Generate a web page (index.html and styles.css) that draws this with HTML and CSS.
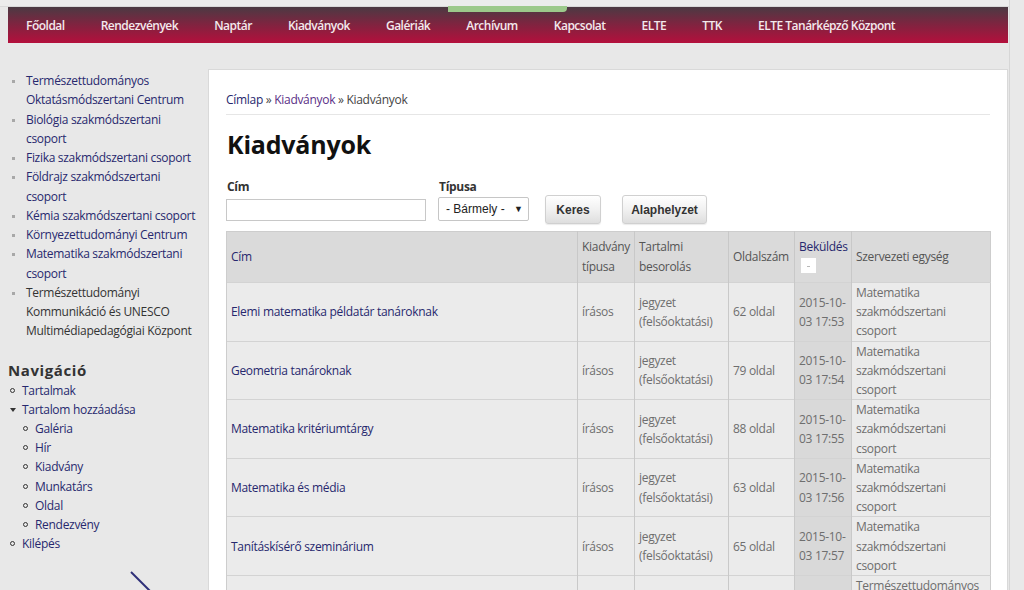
FILE: index.html
```html
<!DOCTYPE html>
<html lang="hu">
<head>
<meta charset="utf-8">
<title>Kiadványok</title>
<link rel="stylesheet" href="styles.css">
</head>
<body>
<div class="page">
  <div class="topline"></div>
  <nav class="mainnav">
    <a href="#">Főoldal</a>
    <a href="#">Rendezvények</a>
    <a href="#">Naptár</a>
    <a href="#">Kiadványok</a>
    <a href="#">Galériák</a>
    <a href="#" class="active">Archívum</a>
    <a href="#">Kapcsolat</a>
    <a href="#">ELTE</a>
    <a href="#">TTK</a>
    <a href="#">ELTE Tanárképző Központ</a>
  </nav>
  <div class="layout">
    <aside class="sidebar">
      <ul class="units">
        <li><a href="#">Természettudományos Oktatásmódszertani Centrum</a></li>
        <li><a href="#">Biológia szakmódszertani csoport</a></li>
        <li><a href="#">Fizika szakmódszertani csoport</a></li>
        <li><a href="#">Földrajz szakmódszertani csoport</a></li>
        <li><a href="#">Kémia szakmódszertani csoport</a></li>
        <li><a href="#">Környezettudományi Centrum</a></li>
        <li><a href="#">Matematika szakmódszertani csoport</a></li>
        <li class="plain">Természettudományi Kommunikáció és UNESCO Multimédiapedagógiai Központ</li>
      </ul>
      <h2 class="navtitle">Navigáció</h2>
      <ul class="navlist">
        <li><a href="#">Tartalmak</a></li>
        <li class="open"><a href="#">Tartalom hozzáadása</a>
          <ul class="sublist">
            <li><a href="#">Galéria</a></li>
            <li><a href="#">Hír</a></li>
            <li><a href="#">Kiadvány</a></li>
            <li><a href="#">Munkatárs</a></li>
            <li><a href="#">Oldal</a></li>
            <li><a href="#">Rendezvény</a></li>
          </ul>
        </li>
        <li><a href="#">Kilépés</a></li>
      </ul>
      <svg class="deco" width="40" height="24" viewBox="0 0 40 24"><line x1="2" y1="2" x2="22" y2="22" stroke="#2e2f78" stroke-width="2"/></svg>
    </aside>
    <main class="main">
      <div class="breadcrumb"><a href="#">Címlap</a> » <a href="#" class="visited">Kiadványok</a> » Kiadványok</div>
      <h1 class="title">Kiadványok</h1>
      <form class="filters">
        <div class="field">
          <label class="label">Cím</label>
          <input type="text" class="text-input">
        </div>
        <div class="field">
          <label class="label">Típusa</label>
          <div class="select"><span>- Bármely -</span><span class="arrow">▼</span></div>
        </div>
        <button type="button" class="btn btn-search">Keres</button>
        <button type="button" class="btn btn-reset">Alaphelyzet</button>
      </form>
      <table class="list">
        <colgroup>
          <col class="c1"><col class="c2"><col class="c3"><col class="c4"><col class="c5"><col class="c6">
        </colgroup>
        <thead>
          <tr>
            <th><a href="#">Cím</a></th>
            <th>Kiadvány típusa</th>
            <th>Tartalmi besorolás</th>
            <th>Oldalszám</th>
            <th class="sorted"><a href="#">Beküldés</a><br><span class="sorticon"><span></span></span></th>
            <th>Szervezeti egység</th>
          </tr>
        </thead>
        <tbody>
          <tr>
            <td><a href="#">Elemi matematika példatár tanároknak</a></td>
            <td>írásos</td>
            <td>jegyzet (felsőoktatási)</td>
            <td>62 oldal</td>
            <td class="sorted">2015-10-03 17:53</td>
            <td>Matematika szakmódszertani csoport</td>
          </tr>
          <tr>
            <td><a href="#">Geometria tanároknak</a></td>
            <td>írásos</td>
            <td>jegyzet (felsőoktatási)</td>
            <td>79 oldal</td>
            <td class="sorted">2015-10-03 17:54</td>
            <td>Matematika szakmódszertani csoport</td>
          </tr>
          <tr>
            <td><a href="#">Matematika kritériumtárgy</a></td>
            <td>írásos</td>
            <td>jegyzet (felsőoktatási)</td>
            <td>88 oldal</td>
            <td class="sorted">2015-10-03 17:55</td>
            <td>Matematika szakmódszertani csoport</td>
          </tr>
          <tr>
            <td><a href="#">Matematika és média</a></td>
            <td>írásos</td>
            <td>jegyzet (felsőoktatási)</td>
            <td>63 oldal</td>
            <td class="sorted">2015-10-03 17:56</td>
            <td>Matematika szakmódszertani csoport</td>
          </tr>
          <tr>
            <td><a href="#">Tanításkísérő szeminárium</a></td>
            <td>írásos</td>
            <td>jegyzet (felsőoktatási)</td>
            <td>65 oldal</td>
            <td class="sorted">2015-10-03 17:57</td>
            <td>Matematika szakmódszertani csoport</td>
          </tr>
          <tr>
            <td><a href="#">A természettudományos oktatás módszertani kérdései</a></td>
            <td>írásos</td>
            <td>jegyzet (felsőoktatási)</td>
            <td>120 oldal</td>
            <td class="sorted">2015-10-03 17:58</td>
            <td>Természettudományos Oktatásmódszertani Centrum</td>
          </tr>
        </tbody>
      </table>
    </main>
  </div>
</div>
</body>
</html>
```

FILE: styles.css
```css
html, body {
  margin: 0;
  padding: 0;
}
body {
  background: #e9e9e9;
  font-family: "Open Sans", "DejaVu Sans", sans-serif;
  font-size: 12px;
  letter-spacing: -0.3px;
  color: #333;
  overflow: hidden;
}
a {
  color: #27286e;
  text-decoration: none;
}
.page {
  width: 1009px;
  min-height: 590px;
  border-right: 1px solid #d6d6d6;
  background: #e8e8e8;
}
.topline {
  height: 6px;
  background: #ececec;
  border-bottom: 1px solid #d9d9d9;
}
.mainnav {
  position: relative;
  margin-left: 8px;
  width: 1000px;
  height: 36px;
  box-sizing: border-box;
  display: flex;
  align-items: center;
  background: linear-gradient(to bottom, #4b3a43 0%, #7c2540 45%, #b40f3c 100%);
}
.mainnav a {
  position: relative;
  padding: 0 18px;
  color: #f3e9ec;
  font-weight: 600;
  font-size: 12px;
  letter-spacing: -0.5px;
  line-height: 37px;
  white-space: nowrap;
}
.mainnav a.active::before {
  content: "";
  position: absolute;
  left: 0;
  top: -1px;
  width: 119px;
  height: 6px;
  background: #9cc98b;
  border-radius: 0 0 4px 0;
}
.layout {
  display: flex;
  align-items: flex-start;
  padding-top: 26px;
}
.sidebar {
  width: 200px;
  flex: none;
  position: relative;
}
.units, .navlist, .sublist {
  list-style: none;
  margin: 0;
  padding: 0;
}
.units {
  padding: 2px 0 0 26px;
  line-height: 19.25px;
}
.units li {
  position: relative;
}
.units li::before {
  content: "";
  position: absolute;
  left: -14px;
  top: 9px;
  width: 3px;
  height: 3px;
  background: #a8a8a8;
}
.units li.plain {
  color: #333;
}
.navtitle {
  margin: 19px 0 0 8px;
  font-size: 15px;
  font-weight: 700;
  letter-spacing: 0.6px;
  line-height: 20px;
  color: #333;
}
.navlist {
  padding-left: 22px;
  line-height: 19.2px;
  margin-top: 1px;
}
.navlist li {
  position: relative;
}
.navlist li::before {
  content: "";
  position: absolute;
  left: -12px;
  top: 7px;
  width: 3px;
  height: 3px;
  border: 1px solid #333;
  border-radius: 50%;
}
.navlist li.open::before {
  left: -12px;
  top: 8px;
  width: 0;
  height: 0;
  border: none;
  border-radius: 0;
  border-left: 3px solid transparent;
  border-right: 3px solid transparent;
  border-top: 4px solid #333;
}
.sublist {
  padding-left: 13px;
}
.deco {
  display: block;
  margin: 17px 0 0 129px;
}
.main {
  margin-left: 8px;
  width: 800px;
  box-sizing: border-box;
  background: #fff;
  border: 1px solid #d9d9d9;
  padding: 0 17px;
  min-height: 540px;
}
.breadcrumb {
  padding-top: 21px;
  padding-bottom: 5px;
  line-height: 18px;
  font-size: 12px;
  color: #444;
  border-bottom: 1px solid #e6e6e6;
}
.breadcrumb a.visited {
  color: #5a2f86;
}
.title {
  margin: 12px 0 0 1px;
  font-size: 25px;
  font-weight: 700;
  letter-spacing: -0.2px;
  line-height: 34px;
  color: #111;
}
.filters {
  display: flex;
  align-items: flex-start;
  margin-top: 17px;
  height: 53px;
}
.field {
  display: flex;
  flex-direction: column;
  margin-right: 12px;
}
.label {
  font-weight: 700;
  font-size: 12px;
  line-height: 17px;
  color: #333;
  padding-left: 1px;
  margin-bottom: 4px;
}
.text-input {
  width: 200px;
  height: 22px;
  box-sizing: border-box;
  border: 1px solid #c8c8c8;
  margin: 0;
  padding: 2px 4px;
}
.select {
  margin-top: -2px;
  width: 91px;
  height: 24px;
  box-sizing: border-box;
  border: 1px solid #c6c6c6;
  border-radius: 2px;
  display: flex;
  align-items: center;
  justify-content: space-between;
  padding: 0 5px 0 7px;
  font-family: "Liberation Sans", Arial, sans-serif;
  font-size: 12px;
  letter-spacing: 0;
  color: #222;
  background: #fff;
}
.select .arrow {
  font-size: 9px;
}
.btn {
  margin-top: 17px;
  height: 29px;
  box-sizing: border-box;
  border: 1px solid #d0d0d0;
  border-radius: 3px;
  background: linear-gradient(to bottom, #ffffff 0%, #f1f1f1 50%, #dedede 100%);
  font-family: "Liberation Sans", Arial, sans-serif;
  font-weight: 700;
  font-size: 12px;
  letter-spacing: 0;
  color: #333;
  padding: 0;
  box-shadow: 0 1px 1px rgba(0,0,0,0.08);
}
.btn-search {
  width: 56px;
  margin-left: 4px;
}
.btn-reset {
  width: 85px;
  margin-left: 21px;
}
.list {
  width: 764px;
  table-layout: fixed;
  border-collapse: collapse;
  border: 1px solid #cdcdcd;
  font-size: 12px;
}
.list col.c1 { width: 351px; }
.list col.c2 { width: 57px; }
.list col.c3 { width: 94px; }
.list col.c4 { width: 66px; }
.list col.c5 { width: 57px; }
.list col.c6 { width: 139px; }
.list th {
  background: #dadada;
  text-align: left;
  font-weight: 400;
  color: #555;
  padding: 5px 3px 6px 4px;
  line-height: 19.5px;
  border-left: 1px solid #c8c8c8;
  vertical-align: middle;
}
.list td {
  background: #ebebeb;
  color: #6e6e6e;
  padding: 0 3px 0 4px;
  line-height: 19.2px;
  border-left: 1px solid #c9c9c9;
  border-top: 1px solid #d3d3d3;
  vertical-align: middle;
  height: 57.6px;
}
.list td.sorted {
  background: #d9d9d9;
}
.list th:first-child, .list td:first-child {
  border-left: 1px solid #cdcdcd;
}
.sorticon {
  display: inline-block;
  width: 15px;
  height: 15px;
  background: #fff;
  margin: 1px 0 0 2px;
  vertical-align: top;
  position: relative;
}
.sorticon span {
  position: absolute;
  left: 6px;
  top: 8px;
  width: 3px;
  height: 1px;
  background: #b8b8b8;
}
```
